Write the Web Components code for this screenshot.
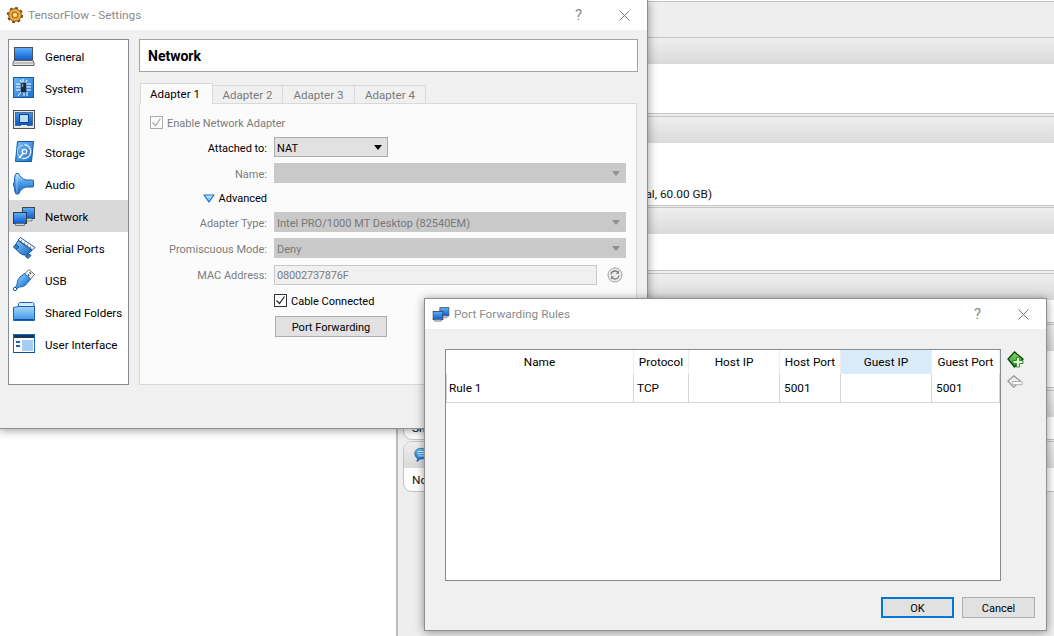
<!DOCTYPE html>
<html>
<head>
<meta charset="utf-8">
<title>TensorFlow - Settings</title>
<style>
  html, body { margin: 0; padding: 0; }
  body {
    position: relative;
    width: 1054px;
    height: 636px;
    overflow: hidden;
    background: #fff;
    color: #000;
    font: 11.800px Roboto, "Noto Sans", sans-serif;
  }
</style>
</head>
<body>

<vb-details></vb-details>

<vb-window heading="TensorFlow - Settings" left="-1" top="-1" width="649" height="430" pad="7">
  <vb-icon slot="icon" name="gear" size="16"></vb-icon>
  <vb-settings></vb-settings>
</vb-window>

<vb-window heading="Port Forwarding Rules" left="424" top="298" width="623" height="333" pad="7">
  <vb-icon slot="icon" name="network" size="18" style="margin-right:-1px"></vb-icon>
  <vb-port-rules></vb-port-rules>
</vb-window>

<script>
// every icon is drawn on a 24 box, a few on their own viewBox
const ICONS = {
  gear: `<svg viewBox="0 0 16 16"><defs><radialGradient id="g"><stop offset=".3" stop-color="#ffdc62"/><stop offset="1" stop-color="#e09420"/></radialGradient></defs>
    <circle cx="8" cy="8" r="7.200" fill="none" stroke="#6e4410" stroke-width="1.800" stroke-dasharray="2.800 2.850"/>
    <circle cx="8" cy="8" r="6.400" fill="url(#g)" stroke="#7d4e12" stroke-width=".8"/>
    <circle cx="8" cy="8" r="2.900" fill="#f7dc8a" stroke="#a8661a" stroke-width="1.300"/></svg>`,
  general: `<svg viewBox="0 0 24 24"><defs><linearGradient id="g" x1="0" y1="0" x2="0" y2="1"><stop offset="0" stop-color="#5fb0ff"/><stop offset="1" stop-color="#0a5fd6"/></linearGradient></defs>
    <rect x="2.500" y="3.500" width="18" height="12.500" fill="url(#g)" stroke="#4c4f52"/>
    <path d="M2 16.500h19l1 2v3H1v-3z" fill="#e4e4e4" stroke="#5e6164"/><path d="M2 19h20" stroke="#9a9a9a"/></svg>`,
  system: `<svg viewBox="0 0 24 24"><defs><linearGradient id="g" x1="0" y1="0" x2="1" y2="1"><stop offset="0" stop-color="#6fb8f4"/><stop offset="1" stop-color="#1c6fd0"/></linearGradient></defs>
    <rect x="1.500" y="1.500" width="20" height="20" fill="url(#g)" stroke="#1459a8"/>
    <path d="M4 8h5M4 11h5M4 14h5M14 8h5M14 11h5M14 14h5M11 3v4M15 4l-2 4M8 4l2 3M12 16v4M15 16v4M9 16l-3 4" stroke="#fff" stroke-width="1"/>
    <rect x="9" y="7" width="5" height="9" fill="#232830" stroke="#0d3f78" stroke-width=".6"/><rect x="9.800" y="8" width="1.400" height="3" fill="#8fa3b8"/></svg>`,
  display: `<svg viewBox="0 0 24 24"><defs><linearGradient id="g" x1="0" y1="0" x2="0" y2="1"><stop offset="0" stop-color="#3f93ec"/><stop offset="1" stop-color="#0a55c0"/></linearGradient></defs>
    <rect x="1.500" y="2.500" width="21" height="18" fill="#e8e8e8" stroke="#50545a"/>
    <rect x="3.500" y="4.500" width="17" height="13" fill="url(#g)" stroke="#2a3a50" stroke-width=".6"/>
    <rect x="7.500" y="6.500" width="9" height="8" fill="#bcdcf8" stroke="#0c3f90" stroke-width="1"/><path d="M9 17h6v1.500H9z" fill="#e8e8e8"/></svg>`,
  storage: `<svg viewBox="0 0 24 24"><defs><linearGradient id="g" x1="0" y1="0" x2="1" y2="1"><stop offset="0" stop-color="#7cc2f6"/><stop offset="1" stop-color="#1a6cc8"/></linearGradient></defs>
    <path d="M5.500 1.500h16l-2 20h-16z" fill="url(#g)" stroke="#15579f"/>
    <path d="M12.500 4.500a7 7 0 1 1-1.500 14" fill="none" stroke="#e6f3fd" stroke-width="1.400"/>
    <path d="M11 18.500a7 7 0 0 1-2-13l2 0" fill="none" stroke="#bcdcf6" stroke-width="1"/>
    <circle cx="12.500" cy="11.500" r="2.200" fill="none" stroke="#fff" stroke-width="1.300"/>
    <path d="M11.500 13L7 18" stroke="#fff" stroke-width="1.600"/></svg>`,
  audio: `<svg viewBox="0 0 24 24"><defs><linearGradient id="g" x1="0" y1="0" x2="0" y2="1"><stop offset="0" stop-color="#bfe0fa"/><stop offset=".45" stop-color="#4d9eea"/><stop offset="1" stop-color="#135eb8"/></linearGradient></defs>
    <path d="M4 1.500h2.500c1.500 3 4 5.500 7.500 6.500h6.500c.6 0 1 .4 1 1v5c0 .6-.4 1-1 1H14c-3.500 1-6 3.500-7.500 7H4c-1-2-1.500-3.500-1.500-5v-2l-1-1v-3l1-1V7c0-2 .5-4 1.500-5.500z" fill="url(#g)" stroke="#1c5ea8"/>
    <path d="M5 2.500v19" stroke="#dff0ff" stroke-width=".8" opacity=".7"/></svg>`,
  network: `<svg viewBox="0 0 24 24"><defs><linearGradient id="g" x1="0" y1="0" x2="0" y2="1"><stop offset="0" stop-color="#60b0fa"/><stop offset="1" stop-color="#0b5cd0"/></linearGradient></defs>
    <rect x="10.500" y="3.500" width="12" height="11" fill="url(#g)" stroke="#3e4650"/><path d="M14 14.500h6v2.500h-6z" fill="#d8d8d8" stroke="#60656b" stroke-width=".7"/>
    <rect x="1.500" y="8.500" width="13" height="11" fill="url(#g)" stroke="#2f3a48"/><path d="M3.500 19.500h9v2h-9z" fill="#d8d8d8" stroke="#5a5f66" stroke-width=".8"/></svg>`,
  serial: `<svg viewBox="0 0 24 24"><defs><linearGradient id="g" x1="0" y1="0" x2="1" y2="1"><stop offset="0" stop-color="#86c6f6"/><stop offset="1" stop-color="#1466c0"/></linearGradient></defs>
    <path d="M6 4L8.500 1.500 23 11.500 20.500 14z" fill="#f0f2f4" stroke="#2c5a90"/>
    <path d="M9 4.500l1 .7M12 6.600l1 .7M15 8.700l1 .7M18 10.800l1 .7" stroke="#556" stroke-width="1"/>
    <path d="M6 4.500l14 10-5.500 4.500c-4 1-9-3-11-7-.5-1-.5-2 0-3z" fill="url(#g)" stroke="#14589e"/>
    <path d="M4 8L1.500 11l2.500 2.500L7 11z" fill="#2f7fd4" stroke="#14589e"/><path d="M16 17.500L13.500 20.500l2.500 2 3-3z" fill="#2f7fd4" stroke="#14589e"/></svg>`,
  usb: `<svg viewBox="0 0 24 24"><defs><linearGradient id="g" x1="0" y1="0" x2="1" y2="1"><stop offset="0" stop-color="#c6e6fc"/><stop offset=".5" stop-color="#48a0ec"/><stop offset="1" stop-color="#125cb4"/></linearGradient></defs>
    <path d="M17 1.500l5.500 5-4 4.500-6-5z" fill="#f4f4f4" stroke="#6a6f76"/>
    <path d="M17.500 4.500l1.500 1.300M15.800 6.500l1.500 1.300" stroke="#3a3f46" stroke-width="1.200"/>
    <path d="M12.500 5.500l6 5.500-3.500 4.500c-2 2.500-5 3.500-8 3.500L4.500 21 3 19.500 5 17c0-3 1-6 3-8z" fill="url(#g)" stroke="#1a5ca6"/>
    <circle cx="3" cy="21" r="1.700" fill="#fff" stroke="#1a5ca6"/></svg>`,
  folder: `<svg viewBox="0 0 24 24"><defs><linearGradient id="g" x1="0" y1="0" x2="0" y2="1"><stop offset="0" stop-color="#a9d8fa"/><stop offset="1" stop-color="#3c94e6"/></linearGradient></defs>
    <path d="M6.500 6.500V3.500l1-1h13l1.500 1v4z" fill="#d7ecfb" stroke="#1b63b4"/>
    <path d="M1.500 7.500l5-1h16v14h-21z" fill="url(#g)" stroke="#1661b6"/>
    <path d="M2.500 19.500h19" stroke="#0f4f9c" stroke-width="1"/></svg>`,
  window: `<svg viewBox="0 0 24 24"><rect x="1.500" y="2.500" width="21" height="18" fill="#fff" stroke="#1a66bc"/>
    <rect x="2" y="3" width="20" height="3" fill="#16365c"/>
    <rect x="10" y="8" width="11" height="11" fill="#a6cdf6"/>
    <path d="M4 9h4v2H4zM4 13h4v2H4z" fill="#1a66bc"/><path d="M2 20.500h21" stroke="#0e4f98"/></svg>`,
  plus: `<svg viewBox="0 0 18 18"><defs><linearGradient id="g" x1="0" y1="0" x2="0" y2="1"><stop offset="0" stop-color="#7cd860"/><stop offset="1" stop-color="#2c9c2c"/></linearGradient></defs>
    <path d="M7.500 1L1 8l6.500 8L16 8z" fill="url(#g)" stroke="#0c3f10" stroke-width="1.300"/>
    <path d="M9.500 6.500h3v3h3.500v3h-3.500v3.500h-3V12.500H6v-3h3.500z" fill="#e2fad2" stroke="#1b7a22" stroke-width=".8"/></svg>`,
  minus: `<svg viewBox="0 0 18 16"><path d="M7.500 1L1 7l6.500 7L15 7z" fill="#ececec" stroke="#8c8c8c" stroke-width="1.200"/>
    <path d="M6 7.500h11v3.500H6z" fill="#fafafa" stroke="#9a9a9a" stroke-width=".8"/></svg>`,
  refresh: `<svg viewBox="0 0 16 16"><circle cx="8" cy="8" r="7" fill="#ececec" stroke="#a2a2a2"/>
    <path d="M4 7.500C4.400 5.300 6 4 8 4c1.100 0 2 .4 2.700 1.100" fill="none" stroke="#7c7c7c" stroke-width="1.300"/><path d="M12 3.600v3.200H8.800z" fill="#7c7c7c"/>
    <path d="M12 8.500C11.600 10.700 10 12 8 12c-1.100 0-2-.4-2.700-1.100" fill="none" stroke="#7c7c7c" stroke-width="1.300"/><path d="M4 12.400V9.200h3.200z" fill="#7c7c7c"/></svg>`,
  chat: `<svg viewBox="0 0 16 18"><defs><linearGradient id="g" x1="0" y1="0" x2="0" y2="1"><stop offset="0" stop-color="#6cc0f6"/><stop offset="1" stop-color="#0f68c8"/></linearGradient></defs>
    <path d="M8 1.500c4 0 7 2.500 7 6s-3 6-7 6h-1l-3.500 3 .5-3.800C2.200 11.500 1 9.700 1 7.500c0-3.500 3-6 7-6z" fill="url(#g)" stroke="#1060b0" stroke-width=".8"/>
    <path d="M4.500 5h8M4 7.500h8.500M5 10h6.500" stroke="#e8f5ff" stroke-width="1.100"/></svg>`
};

class VbIcon extends HTMLElement {
  connectedCallback() {
    const size = this.getAttribute('size') || 24;
    this.attachShadow({mode: 'open'}).innerHTML = `
      <style>
        :host { display: block; width: ${size}px; height: ${size}px; flex: none; }
        svg { display: block; width: 100%; height: 100%; overflow: visible; }
      </style>
      ${ICONS[this.getAttribute('name')]}`;
  }
}
customElements.define('vb-icon', VbIcon);

// a floating window on the screenshot's desktop
class VbWindow extends HTMLElement {
  connectedCallback() {
    const a = n => this.getAttribute(n);
    this.attachShadow({mode: 'open'}).innerHTML = `
      <style>
        :host {
          position: absolute;
          left: ${a('left')}px; top: ${a('top')}px;
          width: ${a('width')}px; height: ${a('height')}px;
          box-sizing: border-box;
          display: flex;
          flex-direction: column;
          background: #f0f0f0;
          border: 1px solid #8e9093;
          box-shadow: 0 1px 9px rgba(0,0,0,.42);
        }
        .bar {
          height: 30px;
          flex: none;
          display: flex;
          align-items: center;
          background: #fff;
          padding-left: ${a('pad')}px;
          color: #8b8b8b;
        }
        .title { flex: 1; margin-left: 5px; white-space: nowrap; }
        .btn { width: 45px; height: 30px; display: flex; align-items: center; justify-content: center; color: #8b8b8b; font-size: 15px; }
        .btn svg { width: 11px; height: 11px; }
        .btn.x { width: 46px; }
        .body { flex: 1; min-height: 0; display: flex; flex-direction: column; }
      </style>
      <div class="bar">
        <slot name="icon"></slot>
        <span class="title">${a('heading')}</span>
        <span class="btn">?</span>
        <span class="btn x"><svg viewBox="0 0 11 11"><path d="M.5.500l10 10M10.500.500l-10 10" stroke="#777" fill="none"/></svg></span>
      </div>
      <div class="body"><slot></slot></div>`;
  }
}
customElements.define('vb-window', VbWindow);

class VbNavItem extends HTMLElement {
  connectedCallback() {
    this.attachShadow({mode: 'open'}).innerHTML = `
      <style>
        :host {
          display: flex;
          align-items: center;
          height: 32px;
          padding-left: 3px;
          gap: 9px;
          white-space: nowrap;
          color: #000;
          font-size: 11.600px;
        }
        :host([current]) { background: #d9d9d9; }
        span { margin-top: 2px; }
      </style>
      <vb-icon name="${this.getAttribute('icon')}"></vb-icon>
      <span><slot></slot></span>`;
  }
}
customElements.define('vb-nav-item', VbNavItem);

class VbCombo extends HTMLElement {
  connectedCallback() {
    const off = this.hasAttribute('disabled');
    this.attachShadow({mode: 'open'}).innerHTML = `
      <style>
        :host {
          display: flex;
          align-items: center;
          justify-content: space-between;
          box-sizing: border-box;
          height: 20px;
          padding: 0 4px 0 2px;
          background: ${off ? '#c9c9c9' : '#e1e1e1'};
          border: 1px solid ${off ? '#c9c9c9' : '#adadad'};
          color: ${off ? '#787878' : '#000'};
        }
        span { margin-top: 2px; }
        i { width: 0; height: 0; margin-right: 1px; border-left: 4.500px solid transparent; border-right: 4.500px solid transparent; border-top: 5px solid ${off ? '#8f8f8f' : '#000'}; }
      </style>
      <span>${this.getAttribute('value') || ''}</span><i></i>`;
  }
}
customElements.define('vb-combo', VbCombo);

class VbCheck extends HTMLElement {
  connectedCallback() {
    const off = this.hasAttribute('disabled');
    const c = off ? '#aaa' : '#333';
    this.attachShadow({mode: 'open'}).innerHTML = `
      <style>
        :host { display: flex; align-items: center; gap: 4px; color: ${off ? '#7c7c7c' : '#000'}; white-space: nowrap; }
        .box { width: 11px; height: 11px; border: 1px solid ${c}; background: ${off ? 'transparent' : '#fff'}; flex: none; }
        svg { display: block; width: 11px; height: 11px; }
        .text { margin-top: 2px; }
      </style>
      <span class="box"><svg viewBox="0 0 11 11"><path d="M1.500 5.500l3 3 5-7" fill="none" stroke="${off ? '#a8a8a8' : '#222'}" stroke-width="1.200"/></svg></span>
      <span class="text"><slot></slot></span>`;
  }
}
customElements.define('vb-check', VbCheck);

class VbButton extends HTMLElement {
  connectedCallback() {
    this.attachShadow({mode: 'open'}).innerHTML = `
      <style>
        :host {
          display: flex;
          align-items: center;
          justify-content: center;
          box-sizing: border-box;
          height: 21px;
          padding-top: 2px;
          background: #e1e1e1;
          border: 1px solid #adadad;
          color: #000;
          white-space: nowrap;
          font-size: 11px;
        }
        :host([default]) { border: 2px solid #0078d7; padding-top: 1px; }
      </style>
      <slot></slot>`;
  }
}
customElements.define('vb-button', VbButton);

class VbSettings extends HTMLElement {
  connectedCallback() {
    this.attachShadow({mode: 'open'}).innerHTML = `
      <style>
        :host { display: flex; gap: 10px; padding: 9px 9px 0 8px; }
        nav {
          width: 121px;
          height: 346px;
          box-sizing: border-box;
          background: #fff;
          border: 1px solid #868c94;
        }
        main { flex: 1; display: flex; flex-direction: column; }
        h1 {
          margin: 0;
          height: 33px;
          box-sizing: border-box;
          display: flex;
          align-items: center;
          padding: 1px 8px 0;
          font-size: 14px;
          font-weight: 700;
          background: #fff;
          border: 1px solid #a0a4a8;
        }
      </style>
      <nav>
        <vb-nav-item icon="general">General</vb-nav-item>
        <vb-nav-item icon="system">System</vb-nav-item>
        <vb-nav-item icon="display">Display</vb-nav-item>
        <vb-nav-item icon="storage">Storage</vb-nav-item>
        <vb-nav-item icon="audio">Audio</vb-nav-item>
        <vb-nav-item icon="network" current>Network</vb-nav-item>
        <vb-nav-item icon="serial">Serial Ports</vb-nav-item>
        <vb-nav-item icon="usb">USB</vb-nav-item>
        <vb-nav-item icon="folder">Shared Folders</vb-nav-item>
        <vb-nav-item icon="window">User Interface</vb-nav-item>
      </nav>
      <main>
        <h1>Network</h1>
        <vb-adapter-pane></vb-adapter-pane>
      </main>`;
  }
}
customElements.define('vb-settings', VbSettings);

class VbAdapterPane extends HTMLElement {
  connectedCallback() {
    this.attachShadow({mode: 'open'}).innerHTML = `
      <style>
        :host { display: block; margin-top: 11px; font-size: 11px; }
        .tabs { display: flex; padding-left: 1px; height: 21px; align-items: flex-end; position: relative; z-index: 1; font-size: 11.500px; }
        .tab {
          height: 19px;
          box-sizing: border-box;
          display: flex;
          align-items: center;
          justify-content: center;
          background: #f0f0f0;
          border: 1px solid #d9d9d9;
          border-left: 0;
          color: #7a7a7a;
        }
        .tab.on {
          height: 21px;
          width: 73px;
          border-left: 1px solid #d9d9d9;
          border-bottom: 0;
          background: #fbfbfb;
          color: #000;
          padding: 0 3px 1px 0;
        }
        .pane {
          box-sizing: border-box;
          width: 498px;
          height: 282px;
          margin-top: -1px;
          background: #fbfbfb;
          border: 1px solid #d9d9d9;
          padding-top: 12px;
        }
        .enable { margin: 0 0 8px 10px; height: 13px; }
        form {
          display: grid;
          grid-template-columns: 127px 352px;
          grid-template-rows: 20px 20px 17px 20px 20px 21px 19px 21px;
          column-gap: 7px;
          row-gap: 6px;
          align-items: center;
        }
        label { text-align: right; color: #7c7c7c; white-space: nowrap; padding-top: 2px; }
        label.on { color: #000; }
        .adv { display: flex; justify-content: flex-end; align-items: center; gap: 4px; color: #000; grid-column: 1; margin-top: 1px; }
        .adv svg { width: 12px; height: 9px; display: block; }
        .mac { display: flex; align-items: center; gap: 10px; align-self: end; }
        .mac span {
          width: 323px; height: 20px; box-sizing: border-box;
          display: flex; align-items: center; padding: 1px 0 0 2px;
          background: #f0f0f0; border: 1px solid #c9c9c9; color: #7c7c7c;
          letter-spacing: -.2px;
        }
        .f { grid-column: 2; }
      </style>
      <div class="tabs">
        <div class="tab on">Adapter 1</div>
        <div class="tab" style="width:70px">Adapter 2</div>
        <div class="tab" style="width:72px">Adapter 3</div>
        <div class="tab" style="width:71px">Adapter 4</div>
      </div>
      <div class="pane">
        <vb-check class="enable" disabled>Enable Network Adapter</vb-check>
        <form>
          <label class="on">Attached to:</label>
          <vb-combo value="NAT" style="width:114px"></vb-combo>
          <label>Name:</label>
          <vb-combo disabled></vb-combo>
          <div class="adv">
            <svg viewBox="0 0 12 9"><defs><linearGradient id="t" x1="0" y1="0" x2="0" y2="1"><stop offset="0" stop-color="#cfeafc"/><stop offset="1" stop-color="#5fb0ee"/></linearGradient></defs><path d="M1 1h10L6 8z" fill="url(#t)" stroke="#1a70c0" stroke-width="1.200" stroke-linejoin="round"/></svg>
            <span>Advanced</span>
          </div>
          <span></span>
          <label>Adapter Type:</label>
          <vb-combo disabled value="Intel PRO/1000 MT Desktop (82540EM)"></vb-combo>
          <label>Promiscuous Mode:</label>
          <vb-combo disabled value="Deny"></vb-combo>
          <label>MAC Address:</label>
          <div class="mac"><span>08002737876F</span><vb-icon name="refresh" size="16"></vb-icon></div>
          <vb-check class="f">Cable Connected</vb-check>
          <vb-button class="f" style="width:112px;margin-left:1px">Port Forwarding</vb-button>
        </form>
      </div>`;
  }
}
customElements.define('vb-adapter-pane', VbAdapterPane);

class VbPortRules extends HTMLElement {
  connectedCallback() {
    const cols = [
      ['Name', 'Rule 1'],
      ['Protocol', 'TCP'],
      ['Host IP', ''],
      ['Host Port', '5001'],
      ['Guest IP', ''],
      ['Guest Port', '5001']
    ];
    const head = cols.map((c, i) => `<div class="th${i === 4 ? ' hot' : ''}">${c[0]}</div>`).join('');
    const row = cols.map((c, i) => `<div class="td${i === 0 ? ' first' : ''}${i === 3 || i === 5 ? ' num' : ''}">${c[1]}</div>`).join('');
    this.attachShadow({mode: 'open'}).innerHTML = `
      <style>
        :host { flex: 1; display: flex; flex-direction: column; padding: 20px 11px 12px 20px; }
        .top { display: flex; gap: 6px; }
        .table {
          width: 556px; height: 232px; box-sizing: border-box;
          background: #fff;
          border: 1px solid #868c94;
          display: grid;
          grid-template-columns: 188px 55px 91px 61px 91px 68px;
          grid-template-rows: 24px 29px;
          align-content: start;
        }
        .th {
          display: flex; align-items: center; justify-content: center;
          border-right: 1px solid #eeeeee;
          white-space: nowrap;
        }
        .th.hot { background: #d9ebf9; }
        .td {
          display: flex; align-items: center;
          padding-left: 3px;
          border-right: 1px solid #d5d5d5;
          border-bottom: 1px solid #d5d5d5;
          box-sizing: border-box;
        }
        .td.first { border-left: 1px solid #d5d5d5; padding-left: 2px; }
        .td.num { padding-left: 4px; }
        .tools { display: flex; flex-direction: column; gap: 5px; padding-top: 2px; }
        .bottom { display: flex; justify-content: flex-end; gap: 8px; margin-top: 16px; }
        vb-button { width: 73px; }
      </style>
      <div class="top">
        <div class="table">${head}${row}</div>
        <div class="tools">
          <vb-icon name="plus" size="18"></vb-icon>
          <vb-icon name="minus" size="16"></vb-icon>
        </div>
      </div>
      <div class="bottom">
        <vb-button default>OK</vb-button>
        <vb-button>Cancel</vb-button>
      </div>`;
  }
}
customElements.define('vb-port-rules', VbPortRules);

// the manager window behind the two dialogs
class VbDetails extends HTMLElement {
  connectedCallback() {
    const cards = [
      {h: 77, text: ''},
      {h: 90, text: '(Normal, 60.00 GB)', far: true},
      {h: 64, text: ''},
      {h: 50, text: ''},
      {h: 64, text: ''},
      {h: 50, text: 'Shared'},
      {h: 51, text: 'None', chat: true}
    ];
    const html = cards.map(c => `
      <section style="height:${c.h}px">
        <header>${c.chat ? '<vb-icon name="chat" size="16"></vb-icon>' : ''}</header>
        <div class="${c.far ? 'far' : 'near'}">${c.text}</div>
      </section>`).join('');
    this.attachShadow({mode: 'open'}).innerHTML = `
      <style>
        :host {
          position: absolute;
          left: 396px; top: 1px; right: 0; bottom: 0;
          box-sizing: border-box;
          overflow: hidden;
          background: #eee;
          border-left: 2px solid #bcbcbc;
          border-top: 1px solid #c4c4c4;
          padding: 35px 0 0 5px;
        }
        section {
          box-sizing: border-box;
          width: 700px;
          margin-bottom: 1.500px;
          display: flex;
          flex-direction: column;
          background: #fff;
          border: 1.500px solid #c4c4c4;
          border-radius: 9px;
          overflow: hidden;
        }
        header {
          flex: none;
          height: 26px;
          box-sizing: border-box;
          padding: 5px 0 0 9px;
          background: linear-gradient(#eeeeee, #dadada);
        }
        section > div { flex: 1; display: flex; align-items: center; white-space: nowrap; color: #111; }
        .near { padding-left: 8px; }
        .far { width: 308px; flex: 1; justify-content: flex-end; align-items: flex-end; padding-bottom: 4px; }
      </style>
      ${html}`;
  }
}
customElements.define('vb-details', VbDetails);
</script>
</body>
</html>
